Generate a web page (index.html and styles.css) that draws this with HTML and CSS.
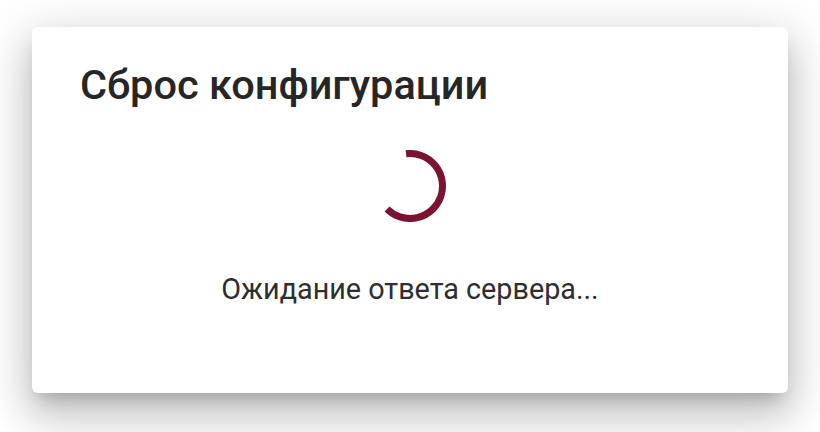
FILE: index.html
```html
<!DOCTYPE html>
<html lang="ru">
<head>
<meta charset="utf-8">
<link rel="stylesheet" href="styles.css">
</head>
<body>
<div class="dialog">
  <h1 class="title">Сброс конфигурации</h1>
  <div class="content">
    <svg class="spinner" width="72" height="72" viewBox="0 0 72 72">
      <path d="M 32.04 3.74 A 32.5 32.5 0 1 1 13.02 58.98" fill="none" stroke="#7b1330" stroke-width="7"/>
    </svg>
    <p class="message">Ожидание ответа сервера...</p>
  </div>
</div>
</body>
</html>
```
FILE: styles.css
```css
html, body {
  margin: 0;
  padding: 0;
  background: #ffffff;
}
body {
  padding: 27px 32px 39px 32px;
  font-family: Roboto, "Noto Sans", sans-serif;
}
.dialog {
  background: #fff;
  border-radius: 6px;
  height: 366px;
  box-sizing: border-box;
  padding: 34px 48px 0 48px;
  box-shadow: 0 11px 15px -7px rgba(0,0,0,.2), 0 24px 38px 3px rgba(0,0,0,.14), 0 9px 46px 8px rgba(0,0,0,.12);
}
.title {
  margin: 0;
  font-size: 41.5px;
  line-height: 48px;
  font-weight: 500;
  color: #262626;
}
.content {
  display: flex;
  flex-direction: column;
  align-items: center;
  padding-top: 41px;
}
.spinner {
  display: block;
}
.message {
  margin: 49px 0 0 0;
  font-size: 28.75px;
  line-height: 36px;
  color: #2e2e2e;
}
```
